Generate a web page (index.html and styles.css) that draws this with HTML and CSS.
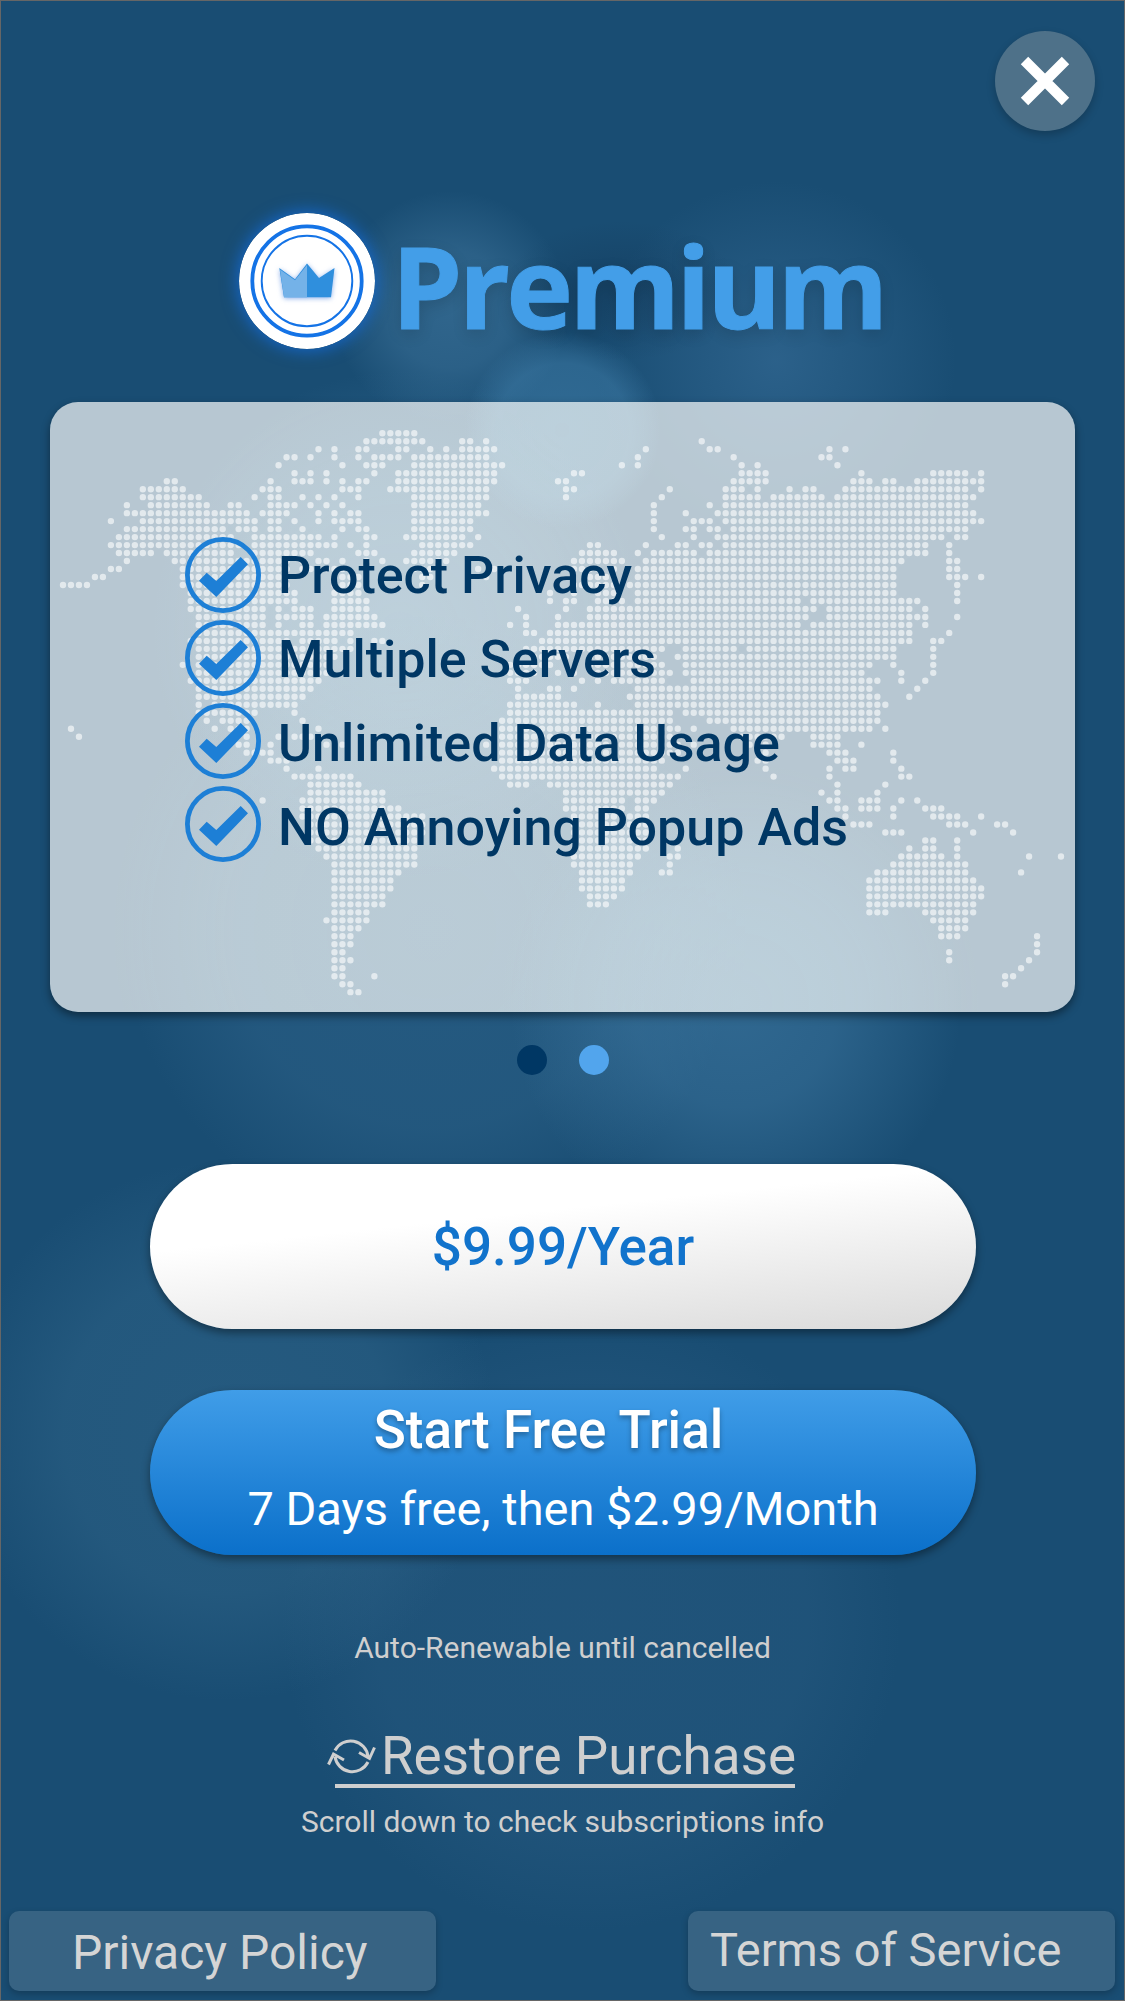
FILE: index.html
```html
<!DOCTYPE html>
<html lang="en">
<head>
<meta charset="utf-8">
<title>Premium</title>
<link rel="stylesheet" href="styles.css">
</head>
<body>
<main class="screen">
  <header class="topbar">
    <button class="close" aria-label="Close">
      <svg viewBox="0 0 100 100" width="100" height="100"><path d="M29.5 29.5 70.5 70.5M70.5 29.5 29.5 70.5" stroke="#fff" stroke-width="10.5"/></svg>
    </button>
  </header>

  <div class="brand">
    <svg class="badge" viewBox="0 0 136 136" width="136" height="136">
      <circle cx="68" cy="68" r="68" fill="#fff"/>
      <circle cx="68" cy="68" r="54.7" fill="none" stroke="#1473e6" stroke-width="3.8"/>
      <circle cx="68" cy="68" r="45.3" fill="none" stroke="#1473e6" stroke-width="1.9"/>
      <g class="crown">
        <path d="M40.300 55 56 66.300 68 50.500 80 65 95.500 55 92 84.300H45Z" fill="#2f8fdd"/>
        <path d="M41 56.500 56 67.300 68 52V84.300H45Z" fill="#74b2e8"/>
      </g>
    </svg>
    <h1 class="title">Premium</h1>
  </div>

  <section class="card">
    <svg class="map" viewBox="0 0 1025 610" width="1025" height="610">
      <path id="dots" transform="translate(13 31.300) scale(7.984)" fill="none" stroke="#fff" stroke-opacity=".6" stroke-width=".8" stroke-linecap="round" stroke-dasharray="0 1"/>
    </svg>
    <div class="checks">
      <svg class="check" viewBox="0 0 76 76"><circle cx="38" cy="38" r="35.600"/><path d="M14 43.700 21.700 35.700 31.300 44 55.700 20 63 27.300 31.300 60Z"/></svg>
      <svg class="check" viewBox="0 0 76 76"><circle cx="38" cy="38" r="35.600"/><path d="M14 43.700 21.700 35.700 31.300 44 55.700 20 63 27.300 31.300 60Z"/></svg>
      <svg class="check" viewBox="0 0 76 76"><circle cx="38" cy="38" r="35.600"/><path d="M14 43.700 21.700 35.700 31.300 44 55.700 20 63 27.300 31.300 60Z"/></svg>
      <svg class="check" viewBox="0 0 76 76"><circle cx="38" cy="38" r="35.600"/><path d="M14 43.700 21.700 35.700 31.300 44 55.700 20 63 27.300 31.300 60Z"/></svg>
    </div>
    <ul class="features">
      <li>Protect Privacy</li>
      <li>Multiple Servers</li>
      <li>Unlimited Data Usage</li>
      <li>NO Annoying Popup Ads</li>
    </ul>
  </section>

  <div class="pager"><span class="dot dot-on"></span><span class="dot"></span></div>

  <button class="pill pill-white">$9.99/Year</button>
  <button class="pill pill-blue">
    <span class="trial">Start Free Trial</span>
    <span class="terms">7 Days free, then $2.99/Month</span>
  </button>

  <p class="note renew">Auto-Renewable until cancelled</p>
  <a class="restore">
    <svg class="sync" viewBox="0 0 50 40" width="50" height="40"><path d="M8 14.500A17.500 17.500 0 0 1 41 20.500M32 16.500 42.500 22.500 47.500 11.500M41 26A17.500 17.500 0 0 1 8 20.500M1.500 28.500 6.500 18 17 24" fill="none" stroke="#cfcfcf" stroke-width="3"/></svg>
    <span>Restore Purchase</span>
  </a>
  <p class="note scroll">Scroll down to check subscriptions info</p>

  <footer class="footer">
    <a class="link link-privacy">Privacy Policy</a>
    <a class="link link-terms">Terms of Service</a>
  </footer>
</main>
<script src="map.js"></script>
</body>
</html>
```
FILE: map.js
```js
// World map as rows of dot columns; "a-b" is a run of dots, "a" a single dot.
const rows = [
  "40-44",
  "38-45 50-51 53 80",
  "32 34 37-38 42-43 46 48 50-54 73 81-82 96 98",
  "28-29 31 34 37 39-42 44-53 72 84 95-96",
  "27 35 38-40 44-55 70 72 85 87 97",
  "29 31 33 39 42-54 64-65 85-88 100 109-113 115",
  "13-14 26 29-31 33 35 37-38 42-54 62-63 84-88 99-101 103-104 107-115",
  "10-15 25-27 35-37 41-53 63-64 76 83-85 87 91 93-94 98-113 115",
  "10-17 24 26-27 30 32 34 37 44-53 63 75 83-87 89-95 97-114",
  "8 11-18 21-22 26-29 31 33 35 44-52 74 81 83-113",
  "8-23 25-28 32 34 36-37 44-53 74 78 82-114",
  "6 10-24 26-27 29 32 34-37 44-51 74 79-81 83-115",
  "8-20 22-24 26-27 30 35 37-38 44-51 74 78-79 81-82 84-113",
  "7-21 24-32 34 38-39 43-50 52 75 79 82-110 112-113",
  "6-22 24-34 36 38 45-51 66-67 73 77-78 80-81 83-108 111",
  "7-11 13-21 24-31 37-39 44-49 65-69 72 74-79 81-108 111",
  "8 14-28 30 32-33 35 38 40 43-48 64-70 73-105 111-112",
  "6-7 15-28 30-31 33-35 44-47 52 54 64-67 69 72-104 111-112",
  "4-5 15-28 34-37 45-46 53 66-69 72-104 111-113 115",
  "0-3 15-28 34-37 45 64-69 71-104 112",
  "16-29 34-37 61 64 67-69 72-104 112",
  "16-29 34-38 61 63-64 67-70 72-92 94-107 112",
  "16-25 27 29-31 34-38 57 63 66-94 96-106 108",
  "17-25 27-31 33-39 58 62 66-93 96-108 112",
  "17-25 27 30-31 33-40 56 58 62-92 94-106 108",
  "17-36 58-59 61-106 111",
  "16-28 30-34 36 39-40 60-106 109-110",
  "17-36 58-75 78-84 86-104 109",
  "17-34 59-63 66-74 77-104 109",
  "15 17-33 56-61 66-75 78-101 104 109",
  "17-33 56-59 62 64 67-76 78-100 105 109",
  "16-32 56-58 65 67 69-75 79-102 105 108",
  "17-31 57 61-62 64 72-101 107",
  "17-30 57-62 71-102 106",
  "17 19-29 56-64 67 72-103",
  "17-24 29 56-76 78-102",
  "18 20-23 30 55-76 81-102",
  "1 19 21-23 32 55-77 79 84-101 103",
  "2 23 27 29-31 55-76 85-90 94-97",
  "22-23 26 33 35 53 55-77 79 86 88 94-97 100",
  "23-26 55-77 88 96-98 104",
  "26-28 55-75 87-88 97-99 104",
  "28 32 54-74 78 88 96 98-99 105",
  "29-36 55-77 89 96 105-106",
  "31-37 56-58 61-76 97 103",
  "31-40 63-75 95 97 102",
  "25 30-40 63-70 72-74 96-97 100-102 105 107",
  "30-42 63-70 72-73 97-98 100-102 104 108-110",
  "30-45 64-73 98 104 109-112 115",
  "31-45 64-73 99-101 111-113 117-118",
  "31-45 64-73 103-105 114 119",
  "31-44 64-73 108-109 112",
  "32-44 65-73 77 106 108-109 112",
  "33-44 64-72 76-77 105-110 112 121 125",
  "34-44 64-71 76 104-113",
  "34-42 65-71 75-76 102-113 120",
  "34-41 65-70 101-114",
  "34-41 65-70 101-115",
  "34-40 66-69 101-115",
  "34-40 66-68 101-114",
  "34-38 101-103 108-114",
  "33-38 109-113",
  "34-37 110-113",
  "34-36 110-112 122",
  "34-36 122",
  "34-35 111 122",
  "34-36 111 121",
  "34-35 120",
  "34-35 39 118-119",
  "35-36 118",
  "36-37"
];
const path = rows.map((row, y) => row.split(" ").map(run => {
  const [a, b = a] = run.split("-").map(Number);
  return `M${a} ${y}h${b - a + 0.01}`;
}).join("")).join("");
document.getElementById("dots").setAttribute("d", path);
```
FILE: styles.css
```css
* { box-sizing: border-box; margin: 0; padding: 0; }

body {
  font-family: Roboto, "Liberation Sans", sans-serif;
  background: #194d73;
}

button { border: 0; font: inherit; }
svg { display: block; }

.screen {
  display: flex;
  flex-direction: column;
  width: 1125px;
  height: 2001px;
  border: 1px solid #666;
  overflow: hidden;
  background:
    radial-gradient(ellipse 120px 70px at 620px 290px, rgba(15, 45, 75, .34) 0, rgba(15, 45, 75, 0) 100%),
    radial-gradient(circle 98px at 562px 429px, rgba(75, 140, 185, .46) 0, rgba(75, 140, 185, .4) 68%, rgba(75, 140, 185, 0) 100%),
    radial-gradient(circle 118px at 450px 308px, rgba(75, 130, 170, .46) 0, rgba(75, 130, 170, .36) 50%, rgba(75, 130, 170, 0) 100%),
    radial-gradient(circle 180px at 775px 360px, rgba(65, 120, 165, .46) 0, rgba(65, 120, 165, .24) 50%, rgba(65, 120, 165, 0) 100%),
    radial-gradient(circle 225px at 735px 1005px, rgba(75, 135, 178, .46) 0, rgba(75, 135, 178, .36) 45%, rgba(75, 135, 178, 0) 100%),
    radial-gradient(circle 310px at 430px 925px, rgba(60, 115, 155, .34) 0, rgba(60, 115, 155, .28) 65%, rgba(60, 115, 155, 0) 100%),
    radial-gradient(circle 250px at 400px 620px, rgba(75, 135, 175, .5) 0, rgba(75, 135, 175, .34) 50%, rgba(75, 135, 175, 0) 100%),
    radial-gradient(circle 270px at 225px 1430px, rgba(65, 120, 155, .3) 0, rgba(65, 120, 155, .26) 60%, rgba(65, 120, 155, 0) 100%),
    radial-gradient(circle 310px at 590px 1620px, rgba(55, 105, 145, .24) 0, rgba(55, 105, 145, .2) 70%, rgba(55, 105, 145, 0) 100%),
    #194d73;
}

.topbar {
  display: flex;
  justify-content: flex-end;
  height: 212px;
  padding: 29.500px 29.500px 0 0;
}

.close {
  width: 100px;
  height: 100px;
  border-radius: 50%;
  background: #4e7189;
  box-shadow: 0 4px 8px rgba(0, 0, 0, .22);
}

.brand {
  display: flex;
  gap: 17px;
  height: 189px;
  padding-left: 237.500px;
}

.badge {
  flex: none;
  border-radius: 50%;
  box-shadow: 0 0 16px 2px rgba(20, 110, 225, .75);
}

.crown { filter: drop-shadow(0 1px 2.500px rgba(60, 120, 220, .6)); }

.title {
  padding-top: 4px;
  font: bold 113px/136px "Open Sans", "Noto Sans", sans-serif;
  letter-spacing: -3.800px;
  color: #439ee8;
  -webkit-text-stroke: 1px #439ee8;
  text-shadow: 0 5px 16px rgba(0, 0, 0, .14);
}

.card {
  display: flex;
  position: relative;
  flex: none;
  width: 1025px;
  height: 610px;
  margin-left: 49px;
  padding-left: 135px;
  border-radius: 28px;
  background:
    radial-gradient(circle 98px at 512px 28px, rgba(188, 210, 221, .45) 0, rgba(188, 210, 221, .4) 68%, rgba(188, 210, 221, 0) 100%),
    radial-gradient(circle 250px at 350px 230px, rgba(188, 210, 221, .4) 0, rgba(188, 210, 221, 0) 100%),
    radial-gradient(circle 240px at 690px 600px, rgba(188, 210, 221, .5) 0, rgba(188, 210, 221, .35) 50%, rgba(188, 210, 221, 0) 100%),
    radial-gradient(circle 320px at 380px 530px, rgba(186, 206, 216, .3) 0, rgba(186, 206, 216, .22) 60%, rgba(186, 206, 216, 0) 100%),
    rgba(236, 240, 242, .75);
  box-shadow: 0 4px 9px rgba(0, 0, 0, .42);
}

.map { position: absolute; left: 0; top: 0; }

.checks {
  display: flex;
  position: relative;
  flex-direction: column;
  gap: 7px;
  padding-top: 135px;
}

.check { width: 76px; height: 76px; }
.check circle { fill: none; stroke: #1d7fd6; stroke-width: 4.800; }
.check path { fill: #1d7fd6; }

.features {
  position: relative;
  padding: 132px 0 0 17px;
  list-style: none;
  font-size: 52px;
  font-weight: 500;
  line-height: 84px;
  white-space: nowrap;
  color: #003764;
}

.pager {
  display: flex;
  justify-content: center;
  gap: 32px;
  margin-top: 33px;
}

.dot { width: 30px; height: 30px; border-radius: 50%; background: #52a5ed; }
.dot-on { background: #003764; }

.pill {
  display: flex;
  flex: none;
  flex-direction: column;
  align-items: center;
  width: 826px;
  height: 165px;
  margin-left: 149px;
  border-radius: 83px;
  box-shadow: 0 4px 8px rgba(0, 0, 0, .4);
  white-space: nowrap;
}

.pill-white {
  justify-content: center;
  margin-top: 89px;
  font-size: 53px;
  font-weight: 500;
  color: #1173cc;
  background: linear-gradient(174deg, #fff 35%, #dadada 100%);
}

.pill-blue {
  margin-top: 61px;
  color: #fff;
  background: linear-gradient(#409de8, #0b70ca);
}

.trial {
  height: 79px;
  margin-right: 29px;
  font-size: 53px;
  font-weight: 500;
  line-height: 81px;
  text-shadow: 0 3px 5px rgba(0, 0, 0, .3);
}

.terms { font-size: 47px; line-height: 80px; }

.note {
  text-align: center;
  font-size: 30px;
  line-height: 40px;
  color: #cfcfcf;
}

.renew { margin-top: 73px; }

.restore {
  display: flex;
  align-self: center;
  gap: 4px;
  height: 60px;
  margin: 60px 2px 0 0;
  color: #cfcfcf;
  font-size: 53px;
  line-height: 56px;
  white-space: nowrap;
  background: linear-gradient(#cfcfcf, #cfcfcf) 8px 100% / 460px 4px no-repeat;
}

.sync { margin-top: 8px; }
.scroll { margin-top: 14px; }

.footer {
  display: flex;
  justify-content: space-between;
  margin-top: 69px;
  padding: 0 9px 0 8px;
}

.link {
  width: 427px;
  height: 80px;
  border-radius: 10px;
  background: #376383;
  box-shadow: 0 3px 7px rgba(0, 0, 0, .22);
  font-size: 48px;
  white-space: nowrap;
  color: #d5d5d5;
}

.link-privacy { padding-left: 63px; line-height: 84px; }
.link-terms { padding-left: 22px; font-size: 47px; line-height: 78px; }
```
